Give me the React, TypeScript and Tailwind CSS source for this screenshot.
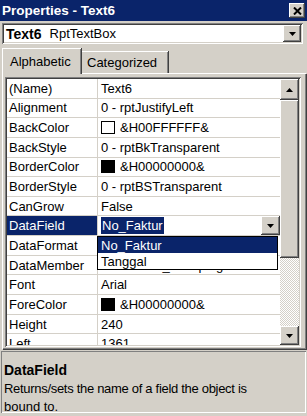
import React from "react";

type Row = { name: string; value: string; swatch?: string };

const rows: Row[] = [
  { name: "(Name)", value: "Text6" },
  { name: "Alignment", value: "0 - rptJustifyLeft" },
  { name: "BackColor", value: "&H00FFFFFF&", swatch: "#ffffff" },
  { name: "BackStyle", value: "0 - rptBkTransparent" },
  { name: "BorderColor", value: "&H00000000&", swatch: "#000000" },
  { name: "BorderStyle", value: "0 - rptBSTransparent" },
  { name: "CanGrow", value: "False" },
  { name: "DataField", value: "" },
  { name: "DataFormat", value: "" },
  { name: "DataMember", value: "cmdFaktur_Grouping" },
  { name: "Font", value: "Arial" },
  { name: "ForeColor", value: "&H00000000&", swatch: "#000000" },
  { name: "Height", value: "240" },
  { name: "Left", value: "1361" },
];

const raised =
  "bg-[#d4d0c8] shadow-[inset_-1px_-1px_#404040,inset_1px_1px_#ffffff,inset_-2px_-2px_#808080,inset_2px_2px_#d4d0c8]";
const sunken =
  "shadow-[inset_1px_1px_#808080,inset_-1px_-1px_#ffffff,inset_2px_2px_#404040,inset_-2px_-2px_#d4d0c8]";

function Arrow({ up }: { up?: boolean }) {
  return (
    <svg width="7" height="4" viewBox="0 0 7 4">
      <path d={up ? "M3.5 0 L7 4 L0 4 Z" : "M0 0 L7 0 L3.5 4 Z"} fill="#000" />
    </svg>
  );
}

export default function App() {
  return (
    <div className="relative flex h-[416px] w-[307px] flex-col overflow-hidden bg-[#d4d0c8] font-['Liberation_Sans',Arial,sans-serif] text-[13px] leading-none text-black">
      {/* title bar */}
      <div className="flex h-[21px] items-center justify-between bg-[#0a246a] pl-[2px] pr-[2px]">
        <span className="text-[13.5px] font-bold text-white">Properties - Text6</span>
        <div className={`flex h-[15px] w-[16px] items-center justify-center ${raised}`}>
          <svg width="9" height="8" viewBox="0 0 9 8">
            <path d="M1 0.5 L8 7.5 M8 0.5 L1 7.5" stroke="#000" strokeWidth="2" />
          </svg>
        </div>
      </div>

      {/* object combo */}
      <div className={`ml-[2px] mt-[2px] flex h-[21px] w-[301px] items-center bg-white pl-[4px] pr-[2px] ${sunken}`}>
        <span className="text-[14px] font-bold">Text6</span>
        <span className="ml-[8px]">RptTextBox</span>
        <div className={`ml-auto flex h-[17px] w-[18px] items-center justify-center ${raised}`}>
          <Arrow />
        </div>
      </div>

      {/* tabs */}
      <div className="ml-[2px] mt-[4px] flex h-[25px] items-end">
        <div className="relative z-10 flex h-[26px] w-[79px] translate-y-[1px] items-center border-l border-t border-white bg-[#d4d0c8] pl-[7px] shadow-[inset_-1px_0_#808080,1px_0_#404040]">
          Alphabetic
        </div>
        <div className="ml-[1px] flex h-[22px] w-[86px] items-center border-t border-white pl-[5px] shadow-[inset_-1px_0_#808080,1px_0_#404040]">
          Categorized
        </div>
      </div>

      {/* tab page */}
      <div className="ml-[2px] flex h-[276px] w-[304px] flex-col border-l border-t border-white pl-[2px] pt-[3px] shadow-[inset_-1px_-1px_#808080,1px_1px_#404040]">
        <div className={`relative flex h-[270px] w-[296px] bg-white p-[2px] ${sunken}`}>
          <div className="relative flex-1 overflow-hidden">
            {rows.map((r) => {
              const sel = r.name === "DataField";
              return (
                <div key={r.name} className="flex h-[19.65px] border-b border-[#d4d0c8]">
                  <div
                    className={`flex w-[91px] items-center border-r border-[#d4d0c8] pl-[2px] ${
                      sel ? "bg-[#0a246a] text-white" : ""
                    }`}
                  >
                    {r.name}
                  </div>
                  <div className="flex flex-1 items-center pl-[3px]">
                    {r.swatch && (
                      <span
                        className="mr-[5px] h-[13px] w-[14px] border border-black"
                        style={{ background: r.swatch }}
                      />
                    )}
                    {sel ? (
                      <div className="flex h-full flex-1 items-center">
                        <span className="bg-[#0a246a] px-[1px] py-[2px] text-white">No_Faktur</span>
                        <div className={`ml-auto flex h-full w-[19px] items-center justify-center ${raised}`}>
                          <Arrow />
                        </div>
                      </div>
                    ) : (
                      <span className="whitespace-nowrap">{r.value}</span>
                    )}
                  </div>
                </div>
              );
            })}

            {/* dropdown list */}
            <div className="absolute left-[90px] top-[157px] flex w-[181px] flex-col border border-black bg-white">
              <div className="flex h-[16px] items-center bg-[#0a246a] pl-[3px] text-white">No_Faktur</div>
              <div className="flex h-[16px] items-center pl-[3px]">Tanggal</div>
            </div>
          </div>

          {/* scrollbar */}
          <div className="flex w-[19px] flex-col">
            <div className={`flex h-[21px] items-center justify-center ${raised}`}>
              <Arrow up />
            </div>
            <div className={`h-[158px] ${raised}`} />
            <div className="flex-1 bg-[repeating-conic-gradient(#ffffff_0_25%,#d4d0c8_0_50%)] bg-[length:2px_2px]" />
            <div className={`flex h-[19px] items-center justify-center ${raised}`}>
              <Arrow />
            </div>
          </div>
        </div>
      </div>

      {/* description */}
      <div className="ml-[1px] mt-[2px] flex h-[62px] w-[305px] flex-col border-l border-t border-[#808080] pl-[2px] pt-[11px] shadow-[inset_-1px_-1px_#ffffff]">
        <div className="h-[19px] text-[14px] font-bold">DataField</div>
        <div className="h-[19px] tracking-[-0.3px]">Returns/sets the name of a field the object is</div>
        <div>bound to.</div>
      </div>
    </div>
  );
}
